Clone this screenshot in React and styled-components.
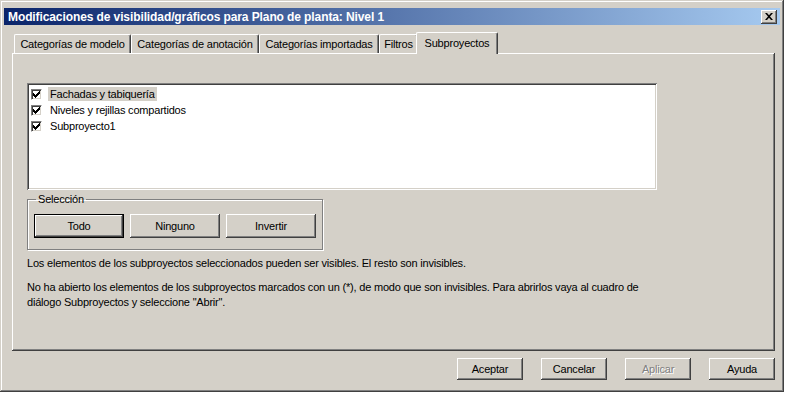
import React from 'react';
import styled, { createGlobalStyle } from 'styled-components';

const GlobalStyle = createGlobalStyle`
  html, body {
    margin: 0;
    padding: 0;
    background: #ffffff;
  }
  body {
    font-family: "Liberation Sans", Arial, sans-serif;
    font-size: 11px;
    letter-spacing: -0.2px;
    color: #000;
  }
`;

const items = [
  { name: 'Fachadas y tabiquería', selected: true },
  { name: 'Niveles y rejillas compartidos' },
  { name: 'Subproyecto1' },
];

const tabs = [
  { label: 'Categorías de modelo', width: 117 },
  { label: 'Categorías de anotación', width: 128 },
  { label: 'Categorías importadas', width: 120 },
  { label: 'Filtros', width: 39 },
  { label: 'Subproyectos', width: 82, active: true },
];

// classic 7x7 check glyph, one column of three pixels per x
const checkRows = [2, 3, 4, 3, 2, 1, 0];

const Check = () => (
  <CheckBox>
    <svg width="7" height="7" viewBox="0 0 7 7" shapeRendering="crispEdges">
      {checkRows.map((y, x) => (
        <rect key={x} x={x} y={y} width="1" height="3" fill="#000" />
      ))}
    </svg>
  </CheckBox>
);

const App = () => {
  return (
    <>
      <GlobalStyle />
      <Window>
        <TitleBar>
          <Title>Modificaciones de visibilidad/gráficos para Plano de planta: Nivel 1</Title>
          <CloseButton>
            <svg width="8" height="7" viewBox="0 0 8 7">
              <path d="M0 0h2l2 2.2L6 0h2L5 3.5 8 7H6L4 4.8 2 7H0l3-3.5z" fill="#000" />
            </svg>
          </CloseButton>
        </TitleBar>
        <Body>
          <TabStrip>
            {tabs.map((t) => (
              <Tab key={t.label} $active={t.active} style={{ width: t.width }}>
                {t.label}
              </Tab>
            ))}
          </TabStrip>
          <Panel>
            <ListBox>
              {items.map((it) => (
                <ListRow key={it.name}>
                  <Check />
                  <ItemLabel $selected={it.selected}>{it.name}</ItemLabel>
                </ListRow>
              ))}
            </ListBox>
            <Group>
              <Legend>Selección</Legend>
              <GroupButtons>
                <Button $default>Todo</Button>
                <Button>Ninguno</Button>
                <Button>Invertir</Button>
              </GroupButtons>
            </Group>
            <Note>
              Los elementos de los subproyectos seleccionados pueden ser visibles. El resto son invisibles.
            </Note>
            <Note $wide>
              No ha abierto los elementos de los subproyectos marcados con un (*), de modo que son invisibles. Para abrirlos vaya al cuadro de diálogo Subproyectos y seleccione "Abrir".
            </Note>
          </Panel>
          <Footer>
            <DialogButton>Aceptar</DialogButton>
            <DialogButton>Cancelar</DialogButton>
            <DialogButton $disabled>Aplicar</DialogButton>
            <DialogButton>Ayuda</DialogButton>
          </Footer>
        </Body>
      </Window>
    </>
  );
};

export default App;

// STYLES

const raised = `
  box-shadow:
    inset -1px -1px #404040,
    inset 1px 1px #ffffff,
    inset -2px -2px #808080,
    inset 2px 2px #d4d0c8;
`;

const Window = styled.div`
  width: 784px;
  height: 392px;
  box-sizing: border-box;
  padding: 4px;
  background: #d4d0c8;
  display: flex;
  flex-direction: column;
  box-shadow:
    inset -1px -1px #404040,
    inset 1px 1px #d4d0c8,
    inset -2px -2px #808080,
    inset 2px 2px #ffffff;
`;

const TitleBar = styled.div`
  height: 17px;
  margin-top: 4px;
  display: flex;
  align-items: center;
  justify-content: space-between;
  padding: 0 3px 0 4px;
  background: linear-gradient(to right, #0a246a, #a6caf0);
`;

const Title = styled.span`
  color: #fff;
  font-weight: bold;
  font-size: 12px;
  letter-spacing: -0.1px;
  white-space: nowrap;
`;

const CloseButton = styled.div`
  width: 16px;
  height: 14px;
  background: #d4d0c8;
  display: flex;
  align-items: center;
  justify-content: center;
  ${raised}
`;

const Body = styled.div`
  flex: 1;
  display: flex;
  flex-direction: column;
  padding: 7px 5px 0 8px;
`;

const TabStrip = styled.div`
  display: flex;
  align-items: flex-end;
  height: 21px;
  padding-left: 2px;
  position: relative;
  z-index: 1;
`;

const Tab = styled.div`
  box-sizing: border-box;
  height: ${(p) => (p.$active ? '22px' : '19px')};
  margin: ${(p) => (p.$active ? '0 -2px -1px -2px' : '0')};
  padding-top: ${(p) => (p.$active ? '4px' : '3px')};
  text-align: center;
  white-space: nowrap;
  background: #d4d0c8;
  border-top: 1px solid #ffffff;
  border-left: 1px solid #ffffff;
  border-right: 1px solid #404040;
  border-top-left-radius: 2px;
  border-top-right-radius: 2px;
  box-shadow: inset -1px 0 #808080;
  font-size: 11px;
`;

const Panel = styled.div`
  height: 298px;
  box-sizing: border-box;
  padding: 30px 15px 0 15px;
  display: flex;
  flex-direction: column;
  align-items: flex-start;
  ${raised}
`;

const ListBox = styled.div`
  width: 630px;
  height: 107px;
  box-sizing: border-box;
  padding: 3px 4px;
  background: #fff;
  box-shadow:
    inset 1px 1px #808080,
    inset -1px -1px #ffffff,
    inset 2px 2px #404040,
    inset -2px -2px #d4d0c8;
`;

const ListRow = styled.div`
  display: flex;
  align-items: center;
  height: 16px;
`;

const CheckBox = styled.div`
  width: 11px;
  height: 11px;
  box-sizing: border-box;
  border: 1px solid #808080;
  border-right-color: #ffffff;
  border-bottom-color: #ffffff;
  box-shadow: inset 1px 1px #404040, inset -1px -1px #d4d0c8;
  background: #fff;
  display: flex;
  align-items: center;
  justify-content: center;
  margin-right: 6px;
`;

const ItemLabel = styled.span`
  padding: 1px 2px;
  background: ${(p) => (p.$selected ? '#d4d0c8' : 'transparent')};
`;

const Group = styled.fieldset`
  margin: 3px 0 0 0;
  width: 296px;
  box-sizing: border-box;
  padding: 8px 6px 11px 6px;
  border: 1px solid #808080;
  box-shadow: 1px 1px 0 #fff, inset 1px 1px 0 #fff;
`;

const Legend = styled.legend`
  padding: 0 2px;
  margin-left: 2px;
  font-size: 11px;
  line-height: 13px;
`;

const GroupButtons = styled.div`
  display: flex;
  gap: 6px;
`;

const Button = styled.div`
  box-sizing: border-box;
  width: 90px;
  height: 24px;
  display: flex;
  align-items: center;
  justify-content: center;
  background: #d4d0c8;
  ${raised}
  ${(p) =>
    p.$default &&
    `
    box-shadow:
      inset 0 0 0 1px #000,
      inset -2px -2px #404040,
      inset 2px 2px #ffffff,
      inset -3px -3px #808080;
  `}
`;

const Note = styled.p`
  margin: ${(p) => (p.$wide ? '9px 0 0 0' : '6px 0 0 0')};
  line-height: 15px;
  max-width: 640px;
`;

const Footer = styled.div`
  display: flex;
  justify-content: flex-end;
  gap: 18px;
  padding-top: 7px;
`;

const DialogButton = styled.div`
  box-sizing: border-box;
  width: 66px;
  height: 22px;
  display: flex;
  align-items: center;
  justify-content: center;
  background: #d4d0c8;
  color: ${(p) => (p.$disabled ? '#808080' : '#000')};
  text-shadow: ${(p) => (p.$disabled ? '1px 1px #fff' : 'none')};
  ${raised}
`;
